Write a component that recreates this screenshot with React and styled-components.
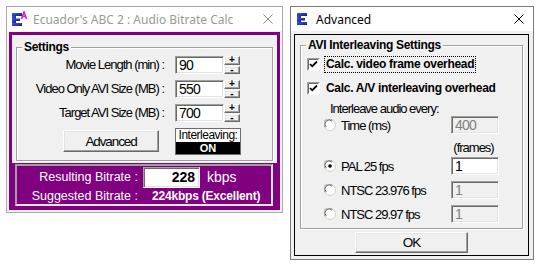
import React from "react";
import styled, { createGlobalStyle, css } from "styled-components";

const GlobalStyle = createGlobalStyle`
  html, body { margin: 0; padding: 0; background: #fff; }
  body { font-family: "Liberation Sans", Arial, sans-serif; color: #000; }
  * { box-sizing: border-box; }
`;

// the original uses a narrow sans; Liberation Sans squeezed gets the same widths
const narrow = css`
  font-family: "Liberation Sans Narrow", "Liberation Sans", Arial, sans-serif;
  font-size: 13px;
  letter-spacing: -1px;
`;

const boldSmall = css`
  font-weight: bold;
  font-size: 12px;
  letter-spacing: -0.3px;
`;

const Desktop = styled.div`
  display: flex;
  align-items: flex-start;
  gap: 7px;
  padding: 6px 0 0 6px;
  width: 540px;
  height: 266px;
`;

const Window = styled.div`
  width: ${(p) => p.$w}px;
  height: ${(p) => p.$h}px;
  border: 1px solid ${(p) => (p.$active ? "#7a7a7a" : "#aaaaaa")};
  background: #f0f0f0;
  display: flex;
  flex-direction: column;
`;

const TitleBar = styled.div`
  height: 24px;
  flex: none;
  background: #fff;
  display: flex;
  align-items: center;
  padding: 0 9px 0 4px;
  gap: 5px;
  font-family: "Segoe UI", "Noto Sans", sans-serif;
  font-size: 12px;
  color: ${(p) => (p.$active ? "#000" : "#999")};
`;

const TitleText = styled.span`
  flex: 1;
  white-space: nowrap;
`;

/* ---- main window ---- */

const MainClient = styled.div`
  flex: 1;
  padding: 1px 2px 2px 2px;
  display: flex;
`;

const PurpleFrame = styled.div`
  flex: 1;
  border: 3px solid #800080;
  background: #800080;
  display: flex;
  flex-direction: column;
`;

const GrayArea = styled.div`
  background: #f0f0f0;
  padding: 5px 4px 2px 4px;
`;

const GroupBox = styled.fieldset`
  margin: 0;
  min-width: 0;
  padding: ${(p) => p.$pad || "2px 0 5px 0"};
  border: 1px solid #a0a0a0;
  box-shadow: 1px 1px 0 #fff, inset 1px 1px 0 #fff;
`;

const Legend = styled.legend`
  margin-left: ${(p) => p.$indent || 5}px;
  padding: 0 2px;
  ${boldSmall};
  line-height: 14px;
  background: #f0f0f0;
`;

const FieldGrid = styled.div`
  display: grid;
  grid-template-columns: 158px 49px 16px;
  grid-template-rows: repeat(3, 18px) 27px;
  row-gap: 6px;
`;

const FieldLabel = styled.div`
  ${narrow};
  text-align: right;
  padding-right: 11px;
  line-height: 18px;
  white-space: nowrap;
`;

const sunken = css`
  border-style: solid;
  border-width: 1px;
  border-color: #a0a0a0 #fff #fff #a0a0a0;
  box-shadow: inset 1px 1px 0 #696969, inset -1px -1px 0 #e3e3e3;
`;

const raised = css`
  border-style: solid;
  border-width: 1px;
  border-color: #fff #696969 #696969 #fff;
  box-shadow: inset -1px -1px 0 #a0a0a0, inset 1px 1px 0 #e3e3e3;
  background: #f0f0f0;
`;

const TextBox = styled.div`
  ${sunken};
  ${narrow};
  width: ${(p) => p.$w || 49}px;
  height: 18px;
  line-height: 15px;
  padding: 1px 0 0 3px;
  background: ${(p) => (p.$disabled ? "#f0f0f0" : "#fff")};
  color: ${(p) => (p.$disabled ? "#808080" : "#000")};
  font-size: 14px;
  letter-spacing: -0.8px;
`;

const Spinner = styled.div`
  display: flex;
  flex-direction: column;
  gap: 1px;
`;

const SpinButton = styled.div`
  ${raised};
  height: 8.5px;
  display: flex;
  align-items: center;
  justify-content: center;
  font-size: 10px;
  font-weight: bold;
  line-height: 8px;
`;

const PushButton = styled.div`
  ${raised};
  ${narrow};
  width: ${(p) => p.$w}px;
  height: ${(p) => p.$h}px;
  display: flex;
  align-items: center;
  justify-content: center;
  font-size: 13.5px;
  letter-spacing: -1.1px;
  justify-self: ${(p) => p.$justify || "auto"};
  margin-right: ${(p) => p.$mr || 0}px;
  margin-top: ${(p) => p.$mt || 0}px;
`;

const Interleave = styled.div`
  grid-column: 2 / 4;
  width: 66px;
  height: 27px;
  border: 1px solid #6d6d6d;
  display: flex;
  flex-direction: column;
  overflow: hidden;
`;

const InterleaveLabel = styled.div`
  ${narrow};
  background: #fff;
  height: 13px;
  line-height: 13px;
  font-size: 12px;
  letter-spacing: -0.5px;
  text-align: center;
  white-space: nowrap;
`;

const InterleaveState = styled.div`
  flex: 1;
  background: #000;
  color: #fff;
  font-weight: bold;
  font-size: 11px;
  line-height: 12px;
  text-align: center;
`;

const ResultPanel = styled.div`
  margin: 1px 4px 1px 3px;
  border: 2px solid;
  border-color: #a0a0a0 #e3e3e3 #e3e3e3 #a0a0a0;
  background: #800080;
  padding: 1px 0 0 0;
  display: grid;
  grid-template-columns: 126px 57px auto;
  row-gap: 1px;
  color: #fff;
  font-size: 12.5px;
`;

const ResultLabel = styled.div`
  text-align: right;
  line-height: ${(p) => p.$lh || 21}px;
  padding-right: 5px;
  white-space: nowrap;
`;

const ResultBox = styled.div`
  ${sunken};
  height: 21px;
  background: #fff;
  color: #000;
  font-weight: bold;
  font-size: 14px;
  line-height: 18px;
  text-align: right;
  padding-right: 4px;
`;

const Unit = styled.div`
  line-height: 21px;
  padding-left: 7px;
  font-size: 14px;
`;

const Suggested = styled.div`
  grid-column: 2 / 4;
  padding-left: 9px;
  font-weight: bold;
  font-size: 12px;
  letter-spacing: -0.2px;
  line-height: 15px;
  white-space: nowrap;
`;

/* ---- advanced window ---- */

const AdvClient = styled.div`
  flex: 1;
  padding: 3px 4px 3px 3px;
  display: flex;
`;

const BlackFrame = styled.div`
  flex: 1;
  border: 1px solid #000;
  padding: 3px 5px 2px 5px;
  display: flex;
  flex-direction: column;
  align-items: center;
`;

const AdvGroup = styled(GroupBox)`
  align-self: stretch;
  display: flex;
  flex-direction: column;
`;

const CheckRow = styled.div`
  display: flex;
  align-items: center;
  height: 17px;
  padding-left: 6px;
  gap: 4px;
  margin-top: ${(p) => p.$mt || 0}px;
  ${boldSmall};
`;

const CheckText = styled.span`
  padding: 0 1px;
  line-height: 15px;
  border: 1px ${(p) => (p.$focus ? "dotted #000" : "solid transparent")};
`;

const Caption = styled.div`
  ${narrow};
  margin: 4px 0 0 29px;
  height: 15px;
  line-height: 15px;
`;

const OptionRow = styled.div`
  display: grid;
  grid-template-columns: 1fr 48px;
  align-items: center;
  height: ${(p) => p.$h || 18}px;
  margin-top: ${(p) => p.$mt || 0}px;
  padding: 0 23px 0 23px;
  ${narrow};
`;

const RadioLabel = styled.label`
  display: flex;
  align-items: center;
  gap: 5px;
`;

const FramesNote = styled.div`
  grid-column: 2;
  text-align: center;
  padding-right: 3px;
  line-height: 16px;
`;

const MainIcon = () => (
  <svg width="17" height="16" viewBox="0 0 17 16">
    <defs>
      <linearGradient id="eg" x1="0" y1="0" x2="1" y2="1">
        <stop offset="0" stopColor="#4a5bd8" />
        <stop offset="1" stopColor="#10188a" />
      </linearGradient>
    </defs>
    <rect x="1" y="2" width="4" height="13" fill="url(#eg)" />
    <rect x="1" y="2" width="10" height="3" fill="url(#eg)" />
    <rect x="1" y="7.5" width="8" height="2.5" fill="url(#eg)" />
    <rect x="1" y="12" width="10" height="3" fill="url(#eg)" />
    <path d="M10.5 8 L13 1 L15.5 8 M11.5 5.5 L14.5 5.5" stroke="#d020c8" strokeWidth="1.6" fill="none" />
  </svg>
);

const AdvIcon = () => (
  <svg width="16" height="16" viewBox="0 0 16 16">
    <defs>
      <linearGradient id="eg2" x1="0" y1="0" x2="1" y2="1">
        <stop offset="0" stopColor="#4a5bd8" />
        <stop offset="1" stopColor="#10188a" />
      </linearGradient>
    </defs>
    <rect x="2" y="2" width="4" height="12" fill="url(#eg2)" />
    <rect x="2" y="2" width="10" height="3" fill="url(#eg2)" />
    <rect x="2" y="7" width="8" height="2.5" fill="url(#eg2)" />
    <rect x="2" y="11" width="10" height="3" fill="url(#eg2)" />
  </svg>
);

const CloseIcon = ({ color }) => (
  <svg width="10" height="10" viewBox="0 0 10 10">
    <path d="M0.5 0.5 L9.5 9.5 M9.5 0.5 L0.5 9.5" stroke={color} strokeWidth="1" />
  </svg>
);

const CheckBox = ({ checked }) => (
  <svg width="13" height="13" viewBox="0 0 13 13">
    <rect x="0.5" y="0.5" width="12" height="12" fill="#fff" stroke="#a0a0a0" />
    <path d="M1.5 11.5 V1.5 H11.5" stroke="#696969" fill="none" />
    <path d="M0.5 12.5 H12.5 V0.5" stroke="#fff" fill="none" />
    {checked && <path d="M3 6 L5.2 8.3 L10 3.5" stroke="#000" strokeWidth="1.8" fill="none" />}
  </svg>
);

const Radio = ({ on }) => (
  <svg width="12" height="12" viewBox="0 0 12 12">
    <circle cx="6" cy="6" r="5.5" fill="#fff" stroke="#d4d0c8" />
    <path d="M1.2 8.5 A5 5 0 0 1 8.5 1.2" stroke="#a0a0a0" fill="none" />
    <path d="M2.2 8 A4 4 0 0 1 8 2.2" stroke="#696969" fill="none" />
    {on && <circle cx="6" cy="6" r="1.8" fill="#000" />}
  </svg>
);

const fields = [
  { label: "Movie Length (min) :", value: "90" },
  { label: "Video Only AVI Size (MB) :", value: "550" },
  { label: "Target AVI Size (MB) :", value: "700" },
];

const frameOptions = [
  { label: "PAL 25 fps", on: true, mt: 1 },
  { label: "NTSC 23.976 fps", on: false, mt: 6 },
  { label: "NTSC 29.97 fps", on: false, mt: 6 },
];

export default function App() {
  return (
    <>
      <GlobalStyle />
      <Desktop>
        <Window $w={277} $h={207}>
          <TitleBar>
            <MainIcon />
            <TitleText>Ecuador's ABC 2 : Audio Bitrate Calc</TitleText>
            <CloseIcon color="#888" />
          </TitleBar>
          <MainClient>
            <PurpleFrame>
              <GrayArea>
                <GroupBox>
                  <Legend $indent={5}>Settings</Legend>
                  <FieldGrid>
                    {fields.map((f) => (
                      <React.Fragment key={f.label}>
                        <FieldLabel>{f.label}</FieldLabel>
                        <TextBox>{f.value}</TextBox>
                        <Spinner>
                          <SpinButton>+</SpinButton>
                          <SpinButton>-</SpinButton>
                        </Spinner>
                      </React.Fragment>
                    ))}
                    <PushButton $w={96} $h={22} $justify="end" $mr={16} $mt={2}>
                      Advanced
                    </PushButton>
                    <Interleave>
                      <InterleaveLabel>Interleaving:</InterleaveLabel>
                      <InterleaveState>ON</InterleaveState>
                    </Interleave>
                  </FieldGrid>
                </GroupBox>
              </GrayArea>
              <ResultPanel>
                <ResultLabel>Resulting Bitrate :</ResultLabel>
                <ResultBox>228</ResultBox>
                <Unit>kbps</Unit>
                <ResultLabel $lh={15}>Suggested Bitrate :</ResultLabel>
                <Suggested>224kbps (Excellent)</Suggested>
              </ResultPanel>
            </PurpleFrame>
          </MainClient>
        </Window>

        <Window $w={244} $h={254} $active>
          <TitleBar $active>
            <AdvIcon />
            <TitleText>Advanced</TitleText>
            <CloseIcon color="#000" />
          </TitleBar>
          <AdvClient>
            <BlackFrame>
              <AdvGroup $pad="4px 0 5px 0">
                <Legend $indent={5}>AVI Interleaving Settings</Legend>
                <CheckRow>
                  <CheckBox checked />
                  <CheckText $focus>Calc. video frame overhead</CheckText>
                </CheckRow>
                <CheckRow $mt={7}>
                  <CheckBox checked />
                  <CheckText>Calc. A/V interleaving overhead</CheckText>
                </CheckRow>
                <Caption>Interleave audio every:</Caption>
                <OptionRow>
                  <RadioLabel>
                    <Radio />
                    Time (ms)
                  </RadioLabel>
                  <TextBox $w={48} $disabled>400</TextBox>
                </OptionRow>
                <OptionRow $h={16} $mt={6}>
                  <FramesNote>(frames)</FramesNote>
                </OptionRow>
                {frameOptions.map((o) => (
                  <OptionRow key={o.label} $mt={o.mt}>
                    <RadioLabel>
                      <Radio on={o.on} />
                      {o.label}
                    </RadioLabel>
                    <TextBox $w={48} $disabled={!o.on}>1</TextBox>
                  </OptionRow>
                ))}
              </AdvGroup>
              <PushButton $w={113} $h={21} $mt={3}>
                OK
              </PushButton>
            </BlackFrame>
          </AdvClient>
        </Window>
      </Desktop>
    </>
  );
}
